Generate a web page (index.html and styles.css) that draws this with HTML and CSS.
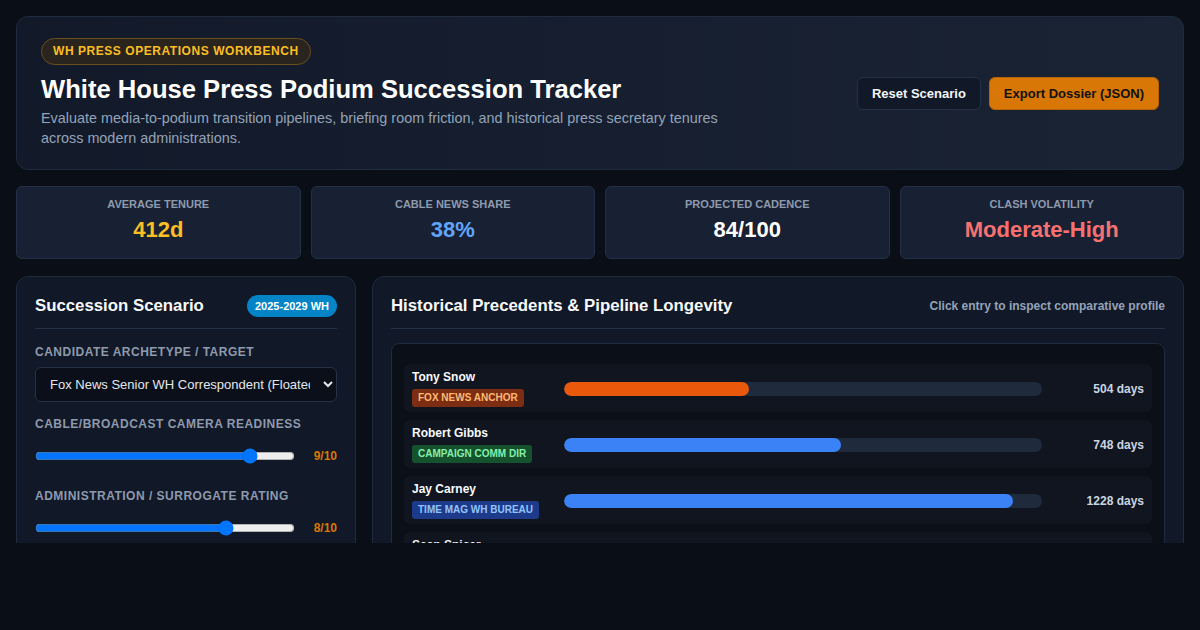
FILE: index.html
```html
<!DOCTYPE html>
<html lang="en">
<head>
<meta charset="utf-8">
<title>White House Press Podium Succession Tracker</title>
<link rel="stylesheet" href="styles.css">
</head>
<body>
<div class="app">
  <header class="hero">
    <div class="hero-text">
      <span class="kicker">WH PRESS OPERATIONS WORKBENCH</span>
      <h1>White House Press Podium Succession Tracker</h1>
      <p>Evaluate media-to-podium transition pipelines, briefing room friction, and historical press secretary tenures across modern administrations.</p>
    </div>
    <div class="actions">
      <button class="btn btn-ghost">Reset Scenario</button>
      <button class="btn btn-primary">Export Dossier (JSON)</button>
    </div>
  </header>

  <section class="stats">
    <div class="stat"><div class="stat-label">Average Tenure</div><div class="stat-value amber">412d</div></div>
    <div class="stat"><div class="stat-label">Cable News Share</div><div class="stat-value blue">38%</div></div>
    <div class="stat"><div class="stat-label">Projected Cadence</div><div class="stat-value white">84/100</div></div>
    <div class="stat"><div class="stat-label">Clash Volatility</div><div class="stat-value red">Moderate-High</div></div>
  </section>

  <section class="main">
    <aside class="panel">
      <div class="panel-head">
        <h2>Succession Scenario</h2>
        <span class="pill">2025-2029 WH</span>
      </div>
      <div class="field field-first">
        <label class="field-label">Candidate Archetype / Target</label>
        <select class="select">
          <option>Fox News Senior WH Correspondent (Floated)</option>
        </select>
      </div>
      <div class="field">
        <label class="field-label">Cable/Broadcast Camera Readiness</label>
        <div class="slider-row">
          <input type="range" class="range" min="0" max="100" value="85">
          <span class="slider-val">9/10</span>
        </div>
      </div>
      <div class="field field-last">
        <label class="field-label">Administration / Surrogate Rating</label>
        <div class="slider-row">
          <input type="range" class="range" min="0" max="100" value="75">
          <span class="slider-val">8/10</span>
        </div>
      </div>
    </aside>

    <div class="panel">
      <div class="panel-head">
        <h2>Historical Precedents &amp; Pipeline Longevity</h2>
        <span class="hint">Click entry to inspect comparative profile</span>
      </div>
      <div class="chart">
        <div class="row">
          <div class="who"><div class="name">Tony Snow</div><span class="tag tag-fox">FOX NEWS ANCHOR</span></div>
          <div class="track"><div class="fill fill-orange" style="width:38.8%"></div></div>
          <div class="days">504 days</div>
        </div>
        <div class="row">
          <div class="who"><div class="name">Robert Gibbs</div><span class="tag tag-camp">CAMPAIGN COMM DIR</span></div>
          <div class="track"><div class="fill fill-blue" style="width:57.9%"></div></div>
          <div class="days">748 days</div>
        </div>
        <div class="row">
          <div class="who"><div class="name">Jay Carney</div><span class="tag tag-time">TIME MAG WH BUREAU</span></div>
          <div class="track"><div class="fill fill-blue" style="width:94%"></div></div>
          <div class="days">1228 days</div>
        </div>
        <div class="row">
          <div class="who"><div class="name">Sean Spicer</div><span class="tag tag-camp">RNC COMM DIRECTOR</span></div>
          <div class="track"><div class="fill fill-blue" style="width:14%"></div></div>
          <div class="days">182 days</div>
        </div>
      </div>
    </div>
  </section>
</div>
</body>
</html>
```

FILE: styles.css
```css
* { box-sizing: border-box; }
html, body { margin: 0; padding: 0; background: #0a0e17; }
body {
  font-family: "Liberation Sans", Arial, sans-serif;
  color: #f1f5f9;
}
.app {
  height: 543px;
  overflow: hidden;
  padding: 16px;
  background: #0a0e17;
}

/* hero */
.hero {
  display: flex;
  align-items: center;
  justify-content: space-between;
  padding: 20px 24px 20px 24px;
  border: 1px solid #1f2b3e;
  border-radius: 12px;
  background: linear-gradient(90deg, #121a2a 0%, #1a2334 100%);
  height: 154px;
}
.kicker {
  display: inline-block;
  font-size: 12px;
  font-weight: 700;
  letter-spacing: 0.55px;
  color: #fbbf24;
  background: #2a241f;
  border: 1px solid #6b4f1d;
  border-radius: 14px;
  padding: 6px 11px 6px 11px;
  line-height: 13px;
}
.hero h1 {
  margin: 9px 0 4px;
  font-size: 25.6px;
  line-height: 30px;
  font-weight: 700;
  color: #ffffff;
}
.hero p {
  margin: 0;
  max-width: 720px;
  font-size: 14.4px;
  line-height: 20px;
  color: #94a3b8;
}
.actions { display: flex; gap: 8px; align-self: center; }
.btn {
  font-family: inherit;
  font-size: 13px;
  font-weight: 700;
  height: 33px;
  padding: 0 14px;
  border-radius: 6px;
  cursor: pointer;
}
.btn-ghost { background: #111827; color: #f1f5f9; border: 1px solid #243044; }
.btn-primary { background: #d97706; color: #111111; border: 1px solid #b86405; }

/* stats */
.stats {
  display: grid;
  grid-template-columns: repeat(4, 1fr);
  gap: 10px;
  margin-top: 16px;
}
.stat {
  height: 73px;
  padding: 11px 12px 0;
  text-align: center;
  background: #182133;
  border: 1px solid #233047;
  border-radius: 6px;
}
.stat-label {
  font-size: 11px;
  line-height: 13px;
  font-weight: 700;
  color: #8e9aad;
  text-transform: uppercase;
}
.stat-value {
  margin-top: 6px;
  font-size: 22px;
  line-height: 26px;
  font-weight: 700;
}
.amber { color: #fbbf24; }
.blue { color: #60a5fa; }
.white { color: #ffffff; }
.red { color: #f87171; }

/* main */
.main {
  display: grid;
  grid-template-columns: 340px 1fr;
  gap: 16px;
  margin-top: 17px;
  align-items: start;
}
.panel {
  background: #111827;
  border: 1px solid #1f2b3e;
  border-radius: 12px;
  padding: 18px 18px 24px;
  min-height: 300px;
}
.panel-head {
  display: flex;
  justify-content: space-between;
  align-items: center;
  height: 34px;
  padding-bottom: 11px;
  border-bottom: 1px solid #243044;
}
.panel-head h2 {
  margin: 0;
  font-size: 16.8px;
  line-height: 22px;
  font-weight: 700;
  color: #f8fafc;
}
.pill {
  background: #0284c7;
  color: #ffffff;
  font-size: 11px;
  font-weight: 700;
  line-height: 22px;
  height: 22px;
  padding: 0 8px;
  border-radius: 11px;
}
.hint { font-size: 12px; font-weight: 700; color: #94a3b8; }

.field { margin-top: 15px; }
.field-first { margin-top: 16px; }
.field-last { margin-top: 16px; }
.field-label {
  display: block;
  font-size: 12px;
  line-height: 14px;
  font-weight: 700;
  letter-spacing: 0.5px;
  color: #8e9aad;
  text-transform: uppercase;
  margin-bottom: 8px;
}
.select {
  width: 100%;
  height: 35px;
  padding: 0 10px;
  font-family: inherit;
  font-size: 13px;
  color: #e5e7eb;
  background: #0b0f19;
  border: 1px solid #263246;
  border-radius: 6px;
  color-scheme: dark;
}
.select option { background: #0b0f19; }
.slider-row {
  display: flex;
  align-items: center;
  justify-content: space-between;
  height: 34px;
}
.range { width: 260px; margin: 0; }
.slider-val { font-size: 12px; font-weight: 700; color: #d97706; }

/* chart */
.chart {
  margin-top: 14px;
  background: #0b0f18;
  border: 1px solid #1f2b3e;
  border-radius: 8px;
  padding: 20px 12px 12px;
  display: flex;
  flex-direction: column;
  gap: 8px;
}
.row {
  display: grid;
  grid-template-columns: 140px 1fr 90px;
  column-gap: 12px;
  align-items: center;
  height: 48px;
  padding: 6px 8px 7px;
  background: #10151f;
  border-radius: 6px;
  cursor: pointer;
}
.name {
  font-size: 12px;
  line-height: 14px;
  font-weight: 700;
  color: #f8fafc;
  margin-bottom: 3px;
}
.tag {
  display: inline-block;
  font-size: 10px;
  font-weight: 700;
  line-height: 18px;
  height: 18px;
  padding: 0 6px;
  border-radius: 3px;
}
.tag-fox { background: #7c2d12; color: #fdba74; }
.tag-camp { background: #14532d; color: #86efac; }
.tag-time { background: #1e3a8a; color: #93c5fd; }
.track {
  height: 14px;
  background: #1f2a3c;
  border-radius: 7px;
  overflow: hidden;
}
.fill { height: 100%; border-radius: 7px; }
.fill-orange { background: #ea580c; }
.fill-blue { background: #3b82f6; }
.days {
  text-align: right;
  font-size: 12px;
  font-weight: 700;
  color: #cbd5e1;
}
```
